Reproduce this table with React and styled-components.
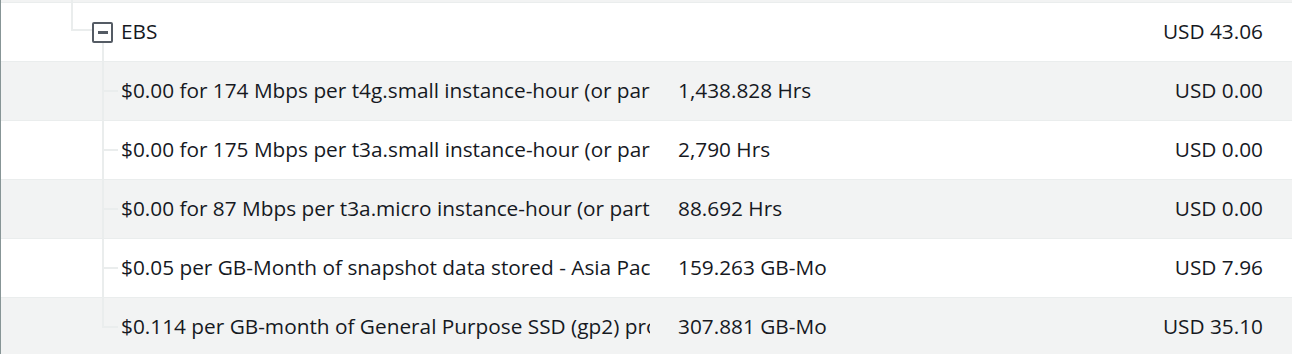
import styled, { createGlobalStyle } from "styled-components";

const GlobalStyle = createGlobalStyle`
    body {
        margin: 0;
        background: #ffffff;
        font-family: "Open Sans", "Noto Sans", sans-serif;
        color: #16191f;
    }
`;

const lineColor = "#eaeded";

const Table = styled.div`
    width: 1292px;
    height: 354px;
    overflow: hidden;
    border-left: 1px solid #879596;
    box-sizing: border-box;
`;

const PrevRow = styled.div`
    height: 2px;
    background: #f2f3f3;
    border-bottom: 1px solid ${lineColor};
    position: relative;
    &::before {
        content: "";
        position: absolute;
        left: 70px;
        top: 0;
        width: 2px;
        height: 3px;
        background: ${lineColor};
    }
`;

const Row = styled.div`
    display: flex;
    align-items: center;
    height: 58px;
    border-bottom: 1px solid ${lineColor};
    background: ${props => props.striped ? '#f2f3f3' : '#ffffff'};
    font-size: 20.8px;
    line-height: 28px;
`;

const TreeCell = styled.div`
    position: relative;
    flex: 0 0 120px;
    align-self: stretch;
`;

const GroupLines = styled.div`
    position: absolute;
    left: 70px;
    top: 0;
    width: 21px;
    height: 28px;
    border-left: 2px solid ${lineColor};
    border-bottom: 2px solid ${lineColor};
    box-sizing: border-box;
    &::after {
        content: "";
        position: absolute;
        left: 29px;
        top: 39px;
        width: 2px;
        height: 20px;
        background: ${lineColor};
    }
`;

const ToggleBox = styled.span`
    position: absolute;
    left: 91px;
    top: 19px;
    width: 21px;
    height: 21px;
    box-sizing: border-box;
    border: 2px solid #545b64;
    border-radius: 2px;
    background: #ffffff;
    display: flex;
    align-items: center;
    justify-content: center;
    &::before {
        content: "";
        width: 10px;
        height: 3px;
        background: #545b64;
    }
`;

const ChildLines = styled.div`
    position: absolute;
    left: 101px;
    top: 0;
    width: 16px;
    height: ${props => props.last ? '30px' : '100%'};
    border-left: 2px solid ${lineColor};
    box-sizing: border-box;
    &::after {
        content: "";
        position: absolute;
        left: 0;
        top: 28px;
        width: 14px;
        height: 2px;
        background: ${lineColor};
    }
`;

const NameCell = styled.div`
    flex: 0 0 529px;
    margin-bottom: 2px;
    white-space: nowrap;
    overflow: hidden;
`;

const UsageCell = styled.div`
    flex: 1;
    margin-bottom: 2px;
    padding-left: 28px;
    white-space: nowrap;
`;

const CostCell = styled.div`
    margin-bottom: 2px;
    padding-right: 29px;
    text-align: right;
    white-space: nowrap;
`;

const items = [
    { name: "$0.00 for 174 Mbps per t4g.small instance-hour (or partial hour)", usage: "1,438.828 Hrs", cost: "USD 0.00" },
    { name: "$0.00 for 175 Mbps per t3a.small instance-hour (or partial hour)", usage: "2,790 Hrs", cost: "USD 0.00" },
    { name: "$0.00 for 87 Mbps per t3a.micro instance-hour (or partial hour)", usage: "88.692 Hrs", cost: "USD 0.00" },
    { name: "$0.05 per GB-Month of snapshot data stored - Asia Pacific (Sydney)", usage: "159.263 GB-Mo", cost: "USD 7.96" },
    { name: "$0.114 per GB-month of General Purpose SSD (gp2) provisioned storage", usage: "307.881 GB-Mo", cost: "USD 35.10" },
];

export default function App() {
    return (
        <>
            <GlobalStyle />
            <Table>
                <PrevRow />
                <Row>
                    <TreeCell>
                        <GroupLines />
                        <ToggleBox />
                    </TreeCell>
                    <NameCell>EBS</NameCell>
                    <UsageCell></UsageCell>
                    <CostCell>USD 43.06</CostCell>
                </Row>
                {items.map((item, index) => (
                    <Row key={item.name} striped={index % 2 === 0}>
                        <TreeCell>
                            <ChildLines last={index === items.length - 1} />
                        </TreeCell>
                        <NameCell>{item.name}</NameCell>
                        <UsageCell>{item.usage}</UsageCell>
                        <CostCell>{item.cost}</CostCell>
                    </Row>
                ))}
            </Table>
        </>
    );
}
